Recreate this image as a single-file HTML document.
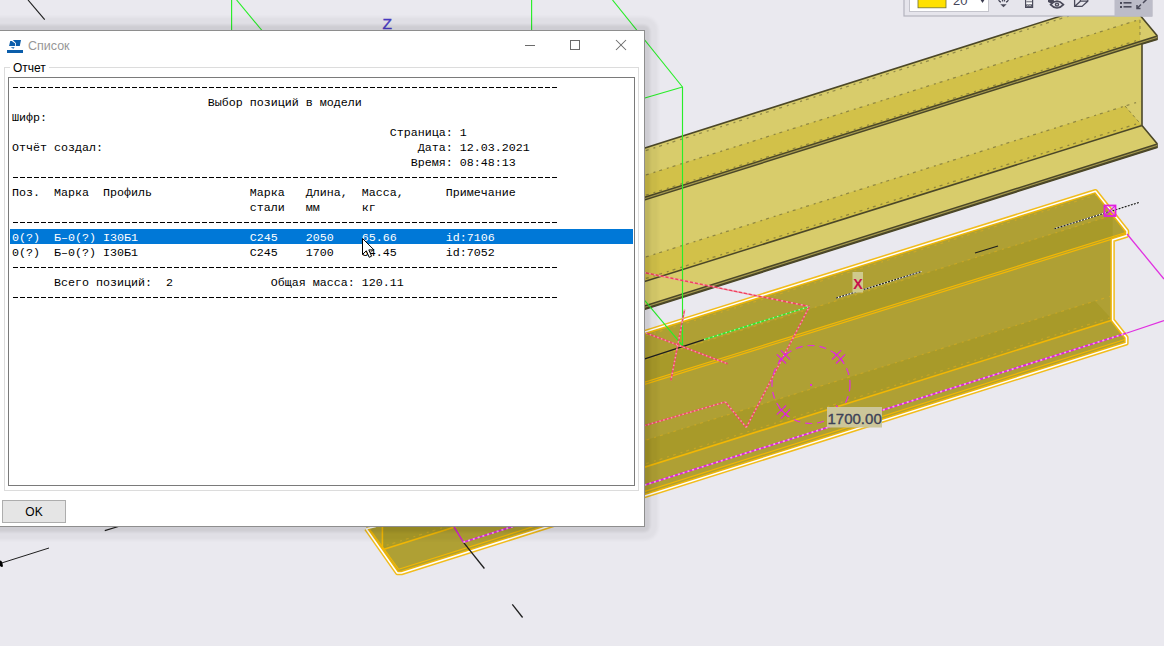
<!DOCTYPE html>
<html><head><meta charset="utf-8">
<style>
html,body{margin:0;padding:0;}
body{width:1164px;height:646px;overflow:hidden;position:relative;background:#EAE9EF;font-family:"Liberation Sans",sans-serif;}
#scene{position:absolute;left:0;top:0;}
#overlay{position:absolute;left:0;top:0;pointer-events:none;}
#dlg{position:absolute;left:-2px;top:30px;width:647px;height:497px;background:#FFFFFF;border:1px solid #8E8E8E;box-sizing:border-box;}
.ic{position:absolute;left:0;top:0;}
.ic svg{display:block}
.title{position:absolute;left:28px;top:39px;font-size:12.5px;color:#979797;}
.grp{position:absolute;left:4px;top:67px;width:635px;height:424px;border:1px solid #DCDCDC;box-sizing:border-box;}
.grplbl{position:absolute;left:10px;top:61px;padding:0 3px;background:#fff;font-size:12px;color:#000;}
.tb{position:absolute;left:8px;top:77px;width:627px;height:409px;border:1px solid #7A7A7A;box-sizing:border-box;background:#fff;}
.mono{position:absolute;left:12px;top:81px;font-family:"Liberation Mono",monospace;font-size:11.667px;line-height:15px;white-space:pre;color:#000;}
.mono .w{color:#fff}
.sel{position:absolute;left:10px;top:229px;width:623px;height:15px;background:#0078D7;}
.ok{position:absolute;left:2px;top:500px;width:64px;height:23px;box-sizing:border-box;border:1px solid #ADADAD;background:#E5E5E5;font-size:12px;text-align:center;line-height:23px;color:#000;}
.mono .d{position:relative;top:-1px}
.tbtn{position:absolute;left:0;top:0;}
.dl{position:absolute;left:13px;width:544px;height:1px;background:repeating-linear-gradient(to right,#000 0,#000 5px,transparent 5px,transparent 7px);}
.shd1{position:absolute;left:-20px;top:25px;width:670px;height:507px;border-radius:6px;background:rgba(0,0,0,0.08);filter:blur(1.2px);}
.shd2{position:absolute;left:-20px;top:17px;width:678px;height:523px;border-radius:13px;background:rgba(0,0,0,0.04);filter:blur(1.8px);}

</style></head><body>
<svg id="scene" width="1164" height="646" viewBox="0 0 1164 646">
<rect width="1164" height="646" fill="#EAE9EF"/>
<line x1="28.0" y1="0.0" x2="44.7" y2="19.6" stroke="#1E1E1E" stroke-width="1.15" />
<line x1="231.6" y1="0.0" x2="231.6" y2="31.0" stroke="#28EE28" stroke-width="1.15" />
<line x1="236.6" y1="0.0" x2="262.0" y2="30.5" stroke="#28EE28" stroke-width="1.15" />
<line x1="531.6" y1="0.0" x2="531.6" y2="31.0" stroke="#28EE28" stroke-width="1.15" />
<text x="382.5" y="28.6" font-family="Liberation Sans" font-size="15.5" fill="#4A3CC8" stroke="#4A3CC8" stroke-width="0.4">Z</text>
<polygon points="560.0,174.9 1124.0,-4.0 1157.0,35.5 1157.0,39.5 1142.0,44.0 1142.0,125.5 1157.0,143.5 1157.0,147.5 560.0,336.0" fill="#D8CC6B"/>
<polygon points="560.0,202.0 1140.0,19.3 1140.0,42.5 560.0,225.2" fill="#D2C149"/>
<polygon points="560.0,284.0 1125.0,106.0 1142.0,125.5 560.0,308.0" fill="#D2C149"/>
<polyline points="560.0,174.9 1124.0,-4.0 1157.0,35.5 1157.0,39.5 1142.0,44.0 1142.0,125.5 1157.0,143.5 1157.0,147.5 560.0,336.0" fill="none" stroke="#4B4728" stroke-width="1.6" stroke-linejoin="round"/>
<line x1="560.0" y1="225.2" x2="1157.0" y2="37.5" stroke="#4B4728" stroke-width="4" />
<line x1="560.0" y1="225.2" x2="1157.0" y2="37.5" stroke="#A89C50" stroke-width="1.1" />
<line x1="560.0" y1="308.0" x2="1142.0" y2="125.5" stroke="#4B4728" stroke-width="1.5" />
<line x1="560.0" y1="334.0" x2="1157.0" y2="145.5" stroke="#4B4728" stroke-width="4" />
<line x1="560.0" y1="334.0" x2="1157.0" y2="145.5" stroke="#A89C50" stroke-width="1.1" />
<line x1="560.0" y1="177.9" x2="1140.0" y2="-6.5" stroke="#6E6838" stroke-width="1.3" stroke-dasharray="2 4 3 5" opacity="0.65"/>
<line x1="560.0" y1="202.0" x2="1140.0" y2="19.3" stroke="#6E6838" stroke-width="1.3" stroke-dasharray="2 4 3 5" opacity="0.65"/>
<line x1="560.0" y1="284.0" x2="1140.0" y2="101.3" stroke="#6E6838" stroke-width="1.3" stroke-dasharray="2 4 3 5" opacity="0.65"/>
<line x1="560.0" y1="305.5" x2="1140.0" y2="122.8" stroke="#6E6838" stroke-width="1.3" stroke-dasharray="2 4 3 5" opacity="0.65"/>
<line x1="560.0" y1="222.2" x2="1140.0" y2="39.5" stroke="#6E6838" stroke-width="1.3" stroke-dasharray="2 4 3 5" opacity="0.65"/>
<line x1="1140.0" y1="20.0" x2="1140.0" y2="38.0" stroke="#6E6838" stroke-width="1" stroke-dasharray="3 3" opacity="0.7"/>
<line x1="1125.0" y1="106.0" x2="1142.0" y2="125.5" stroke="#6E6838" stroke-width="1" stroke-dasharray="3 3" opacity="0.7"/>
<polygon points="360.0,421.1 1095.5,191.2 1127.0,231.0 1127.0,235.5 1112.6,240.0 1112.6,320.0 1126.4,337.5 1126.4,343.4 401.5,573.0 397.3,573.0 366.2,528.8 368.0,515.0" fill="#AFA034"/>
<polygon points="360.0,448.4 1112.6,215.2 1112.6,238.6 360.0,471.8" fill="#A89A29"/>
<polygon points="382.4,521.7 1095.0,301.0 1112.6,320.0 382.4,549.7" fill="#A89A29"/>
<line x1="360.0" y1="471.8" x2="1127.0" y2="233.3" stroke="#F2B705" stroke-width="3.4" />
<line x1="360.0" y1="471.8" x2="1127.0" y2="233.3" stroke="#AFA034" stroke-width="1" />
<line x1="382.4" y1="549.7" x2="1112.6" y2="320.0" stroke="#F2B705" stroke-width="1.6" />
<line x1="382.4" y1="520.0" x2="382.4" y2="549.7" stroke="#F2B705" stroke-width="1.6" />
<line x1="1112.6" y1="240.0" x2="1112.6" y2="320.0" stroke="#F2B705" stroke-width="1.4" />
<line x1="1112.6" y1="320.0" x2="1126.4" y2="337.5" stroke="#F2B705" stroke-width="1.2" />
<line x1="398.7" y1="569.3" x2="1126.4" y2="339.0" stroke="#F2B705" stroke-width="1.2" />
<line x1="368.0" y1="527.0" x2="398.7" y2="569.3" stroke="#F2B705" stroke-width="1.2" />
<clipPath id="lc"><polygon points="360.0,421.1 1095.5,191.2 1127.0,231.0 1127.0,235.5 1112.6,240.0 1112.6,320.0 1126.4,337.5 1126.4,343.4 401.5,573.0 397.3,573.0 366.2,528.8 368.0,515.0"/></clipPath><g clip-path="url(#lc)">
<line x1="360.0" y1="425.1" x2="1110.0" y2="190.7" stroke="#E0B020" stroke-width="1.2" stroke-dasharray="2 4 3 5" opacity="0.55"/>
<line x1="360.0" y1="448.4" x2="1110.0" y2="216.0" stroke="#E0B020" stroke-width="1.2" stroke-dasharray="2 4 3 5" opacity="0.55"/>
<line x1="360.0" y1="528.7" x2="1110.0" y2="296.4" stroke="#E0B020" stroke-width="1.2" stroke-dasharray="2 4 3 5" opacity="0.55"/>
<line x1="360.0" y1="553.7" x2="1110.0" y2="317.8" stroke="#E0B020" stroke-width="1.2" stroke-dasharray="2 4 3 5" opacity="0.55"/>
</g>
<polyline points="360.0,421.1 1095.5,191.2 1127.0,231.0 1127.0,235.5 1112.6,240.0 1112.6,320.0 1126.4,337.5 1126.4,343.4 401.5,573.0 397.3,573.0 366.2,528.8" fill="none" stroke="#F2B705" stroke-width="4.5" stroke-linejoin="round" opacity="0.9"/>
<polyline points="360.0,421.1 1095.5,191.2 1127.0,231.0 1127.0,235.5 1112.6,240.0 1112.6,320.0 1126.4,337.5 1126.4,343.4 401.5,573.0 397.3,573.0 366.2,528.8" fill="none" stroke="#FFFFFF" stroke-width="1.5" stroke-linejoin="round"/>
<line x1="366.2" y1="528.8" x2="376.0" y2="526.5" stroke="#FFFFFF" stroke-width="1.4" />
<line x1="449.9" y1="520.0" x2="463.3" y2="542.2" stroke="#D020D0" stroke-width="1.5" />
<line x1="463.3" y1="542.2" x2="484.4" y2="568.5" stroke="#1E1E1E" stroke-width="1.3" />
<line x1="463.3" y1="542.2" x2="1127.0" y2="333.0" stroke="#E020E0" stroke-width="1.7" />
<line x1="463.3" y1="542.2" x2="1127.0" y2="333.0" stroke="#FFFFFF" stroke-width="1.7" stroke-dasharray="2 3" opacity="0.6"/>
<line x1="1127.0" y1="333.0" x2="1164.0" y2="320.5" stroke="#E030E0" stroke-width="1.3" />
<line x1="1127.0" y1="234.0" x2="1164.0" y2="279.0" stroke="#E030E0" stroke-width="1.3" />
<line x1="1054.4" y1="228.8" x2="1139.6" y2="202.3" stroke="#FFFFFF" stroke-width="1.2" />
<line x1="1054.4" y1="228.8" x2="1139.6" y2="202.3" stroke="#1E1E1E" stroke-width="1.2" stroke-dasharray="2 1.2"/>
<line x1="975.0" y1="253.0" x2="998.0" y2="246.0" stroke="#1E1E1E" stroke-width="1.3" />
<line x1="836.1" y1="298.1" x2="921.5" y2="271.5" stroke="#FFFFFF" stroke-width="1.2" />
<line x1="836.1" y1="298.1" x2="921.5" y2="271.5" stroke="#1E1E1E" stroke-width="1.2" stroke-dasharray="2 1.2"/>
<rect x="1104.5" y="205.5" width="11" height="10.5" fill="none" stroke="#E020E0" stroke-width="1.8"/>
<line x1="1104.5" y1="205.5" x2="1115.5" y2="216.0" stroke="#E020E0" stroke-width="1.1" />
<line x1="1115.5" y1="205.5" x2="1104.5" y2="216.0" stroke="#E020E0" stroke-width="1.1" />
<line x1="612.5" y1="0.0" x2="682.5" y2="87.0" stroke="#28EE28" stroke-width="1.15" />
<line x1="644.0" y1="98.3" x2="682.5" y2="87.0" stroke="#28EE28" stroke-width="1.15" />
<line x1="682.5" y1="87.0" x2="682.5" y2="346.0" stroke="#28EE28" stroke-width="1.15" />
<line x1="644.0" y1="272.5" x2="809.5" y2="306.5" stroke="#F04060" stroke-width="1.5" />
<line x1="644.0" y1="272.5" x2="809.5" y2="306.5" stroke="#FFFFFF" stroke-width="1.5" stroke-dasharray="2 3" opacity="0.5"/>
<line x1="644.0" y1="299.7" x2="682.5" y2="345.7" stroke="#28EE28" stroke-width="1.15" />
<line x1="644.0" y1="359.2" x2="704.0" y2="339.6" stroke="#1E1E1E" stroke-width="1.3" />
<line x1="704.0" y1="339.6" x2="809.5" y2="306.5" stroke="#28EE28" stroke-width="1.3" />
<line x1="704.0" y1="339.6" x2="809.5" y2="306.5" stroke="#FFFFFF" stroke-width="1.3" stroke-dasharray="1.5 3" opacity="0.6"/>
<line x1="646.0" y1="333.0" x2="727.7" y2="363.8" stroke="#F04868" stroke-width="1.5" />
<line x1="646.0" y1="333.0" x2="727.7" y2="363.8" stroke="#FFFFFF" stroke-width="1.5" stroke-dasharray="1.5 2.5" opacity="0.45"/>
<line x1="684.6" y1="309.7" x2="670.9" y2="380.5" stroke="#F04868" stroke-width="1.5" />
<line x1="684.6" y1="309.7" x2="670.9" y2="380.5" stroke="#FFFFFF" stroke-width="1.5" stroke-dasharray="1.5 2.5" opacity="0.45"/>
<line x1="644.0" y1="425.8" x2="725.4" y2="401.9" stroke="#F04868" stroke-width="1.5" />
<line x1="644.0" y1="425.8" x2="725.4" y2="401.9" stroke="#FFFFFF" stroke-width="1.5" stroke-dasharray="1.5 2.5" opacity="0.45"/>
<line x1="725.4" y1="401.9" x2="746.3" y2="427.4" stroke="#F04868" stroke-width="1.5" />
<line x1="725.4" y1="401.9" x2="746.3" y2="427.4" stroke="#FFFFFF" stroke-width="1.5" stroke-dasharray="1.5 2.5" opacity="0.45"/>
<line x1="746.3" y1="427.4" x2="809.5" y2="306.5" stroke="#F04868" stroke-width="1.5" />
<line x1="746.3" y1="427.4" x2="809.5" y2="306.5" stroke="#FFFFFF" stroke-width="1.5" stroke-dasharray="1.5 2.5" opacity="0.45"/>
<circle cx="811" cy="384.5" r="39" fill="none" stroke="#E030E0" stroke-width="1.2" stroke-dasharray="7 5"/>
<rect x="810" y="384" width="2" height="2" fill="#E030E0"/>
<line x1="836.0" y1="405.5" x2="845.2" y2="414.7" stroke="#E020E0" stroke-width="1.1" />
<line x1="832.0" y1="409.5" x2="841.2" y2="418.7" stroke="#E020E0" stroke-width="1.1" />
<line x1="843.2" y1="407.5" x2="834.0" y2="416.7" stroke="#E020E0" stroke-width="1.1" />
<line x1="790.0" y1="409.5" x2="780.8" y2="418.7" stroke="#E020E0" stroke-width="1.1" />
<line x1="786.0" y1="405.5" x2="776.8" y2="414.7" stroke="#E020E0" stroke-width="1.1" />
<line x1="788.0" y1="416.7" x2="778.8" y2="407.5" stroke="#E020E0" stroke-width="1.1" />
<line x1="786.0" y1="363.5" x2="776.8" y2="354.3" stroke="#E020E0" stroke-width="1.1" />
<line x1="790.0" y1="359.5" x2="780.8" y2="350.3" stroke="#E020E0" stroke-width="1.1" />
<line x1="778.8" y1="361.5" x2="788.0" y2="352.3" stroke="#E020E0" stroke-width="1.1" />
<line x1="832.0" y1="359.5" x2="841.2" y2="350.3" stroke="#E020E0" stroke-width="1.1" />
<line x1="836.0" y1="363.5" x2="845.2" y2="354.3" stroke="#E020E0" stroke-width="1.1" />
<line x1="834.0" y1="352.3" x2="843.2" y2="361.5" stroke="#E020E0" stroke-width="1.1" />
<rect x="852.5" y="272" width="10.5" height="20.5" fill="#CFCA8C"/>
<text x="853.2" y="288.8" font-family="Liberation Sans" font-weight="bold" font-size="14" fill="#C8104A" textLength="9.5" lengthAdjust="spacingAndGlyphs">X</text>
<rect x="827" y="407" width="55" height="20.5" fill="#CCC69A"/>
<text x="827.5" y="424" font-family="Liberation Sans" font-size="15" fill="#3C4258" stroke="#3C4258" stroke-width="0.35">1700.00</text>
<line x1="0.0" y1="563.5" x2="49.0" y2="548.0" stroke="#1E1E1E" stroke-width="1.0" />
<polygon points="0,560.5 1.5,561 2.5,563.5 3,566.5 1.5,567 0,566" fill="#000"/>
<line x1="104.8" y1="530.6" x2="120.0" y2="526.0" stroke="#1E1E1E" stroke-width="1.1" />
<line x1="512.3" y1="604.4" x2="522.6" y2="617.5" stroke="#1E1E1E" stroke-width="1.3" />
<rect x="904" y="-2" width="248" height="18" fill="#E6E5EC" stroke="#B4B4BE" stroke-width="1.2"/>
<rect x="1114.5" y="-2" width="37.5" height="18.5" fill="#BCBCC8"/>
<rect x="909.5" y="-2" width="79" height="13.5" fill="#FFFFFF" stroke="#C4C4CC" stroke-width="1"/>
<rect x="918" y="-2" width="28" height="9.8" fill="#FFE100" stroke="#707030" stroke-width="0.8"/>
<text x="953" y="5" font-family="Liberation Sans" font-size="13" fill="#45455A">20</text>
<path d="M980 -1 L985 -1 L982.5 3 Z" fill="#3C3C50"/>
<path d="M998.5 -1 Q999 2 1001 2 M1008.5 -1 Q1008 2 1006 2 M1002.5 -1 V1.5 M1004.5 -1 V1.5" stroke="#4A4A5A" stroke-width="1.3" fill="none"/><path d="M1000.3 4.2 L1006.7 4.2 L1003.5 7.2 Z" fill="#4A4A5A"/>
<rect x="1025.6" y="-1" width="7" height="8.4" fill="#FFFFFF" stroke="#4A4A5A" stroke-width="1.2"/><rect x="1026.2" y="0.8" width="5.8" height="1.6" fill="#8E8E98"/><path d="M1026.2 4.3 H1032 V6.8 H1026.2 Z" fill="#4A4A5A"/><path d="M1027 5.6 L1028.5 5 L1030 5.6 L1031.3 5" stroke="#FFFFFF" stroke-width="0.6" fill="none"/>
<path d="M1048 -1 H1053 L1054.5 1.5 L1051 3.5 L1048 2 Z" fill="#4A4A5A"/><path d="M1050.6 4.6 Q1057 -2.2 1063.4 4.6 Q1057 11.4 1050.6 4.6 Z" fill="none" stroke="#4A4A5A" stroke-width="1.7"/><circle cx="1057" cy="4.6" r="2.2" fill="#4A4A5A"/><circle cx="1057" cy="4.6" r="0.8" fill="#E6E5EC"/>
<path d="M1074.6 -1 V6.4 H1082 L1087.8 1.2 V-1 M1074.6 6.4 L1080.4 1.2 H1087.8 M1080.4 1.2 V-1" fill="none" stroke="#4A4A5A" stroke-width="1.3"/>
<g fill="#4A4A5A"><rect x="1120" y="2" width="2" height="2"/><rect x="1120" y="6" width="2" height="2"/><rect x="1123.5" y="2" width="8" height="1.6"/><rect x="1123.5" y="6" width="8" height="1.6"/></g>
<path d="M1137 8.5 L1141 4.5 M1137 5 V8.5 H1140.5 M1143 3 L1147 -1" stroke="#4A4A5A" stroke-width="1.5" fill="none"/>
</svg>
<div class="shd2"></div><div class="shd1"></div><div id="dlg"></div>
<svg class="ic" width="30" height="60" viewBox="0 0 30 60"><g fill="#0A5DAA"><rect x="7" y="50" width="16" height="3"/><polygon points="12.8,40 21,40 19.8,46 16,46 16,43.2"/><polygon points="10.2,41 11.8,40.9 15.2,43.6 15.2,46 9.1,46"/><polygon points="10.6,47.3 14.6,47.3 13.4,48.8"/></g></svg>
<div class="title">Список</div>
<svg class="tbtn" width="1164" height="60" viewBox="0 0 1164 60"><g stroke="#6B6B6B" stroke-width="1" fill="none" shape-rendering="crispEdges"><line x1="525" y1="45.5" x2="535" y2="45.5"/><rect x="570.5" y="40.5" width="9" height="9"/></g><g stroke="#6B6B6B" stroke-width="1.05" fill="none"><line x1="616" y1="40" x2="626" y2="50"/><line x1="626" y1="40" x2="616" y2="50"/></g></svg>
<div class="grp"></div>
<div class="grplbl">Отчет</div>
<div class="tb"></div>
<div class="sel"></div>
<div class="mono">
                            Выбор позиций в модели
Шифр:
                                                      Страница: 1
Отчёт создал:                                             Дата: 12.03.2021
                                                         Время: 08:48:13

Поз.  Марка  Профиль              Марка   Длина,  Масса,      Примечание
                                  стали   мм      кг

<span class="w">0(?)  Б–0(?) I30Б1                С245    2050    65.66       id:7106</span>
0(?)  Б–0(?) I30Б1                С245    1700    54.45       id:7052

      Всего позиций:  2              Общая масса: 120.11</div>
<div class="dl" style="top:87px"></div><div class="dl" style="top:177px"></div><div class="dl" style="top:222px"></div><div class="dl" style="top:267px"></div><div class="dl" style="top:297px"></div>
<div class="ok">OK</div>
<svg id="overlay" width="1164" height="646" viewBox="0 0 1164 646">
<path d="M362.5 238.5 V254.5 L366.3 250.8 L369.2 257.3 L371.6 256.2 L368.8 249.9 L374 249.9 Z" fill="#FFFFFF" stroke="#000000" stroke-width="1" stroke-linejoin="miter"/>
</svg>
</body></html>
